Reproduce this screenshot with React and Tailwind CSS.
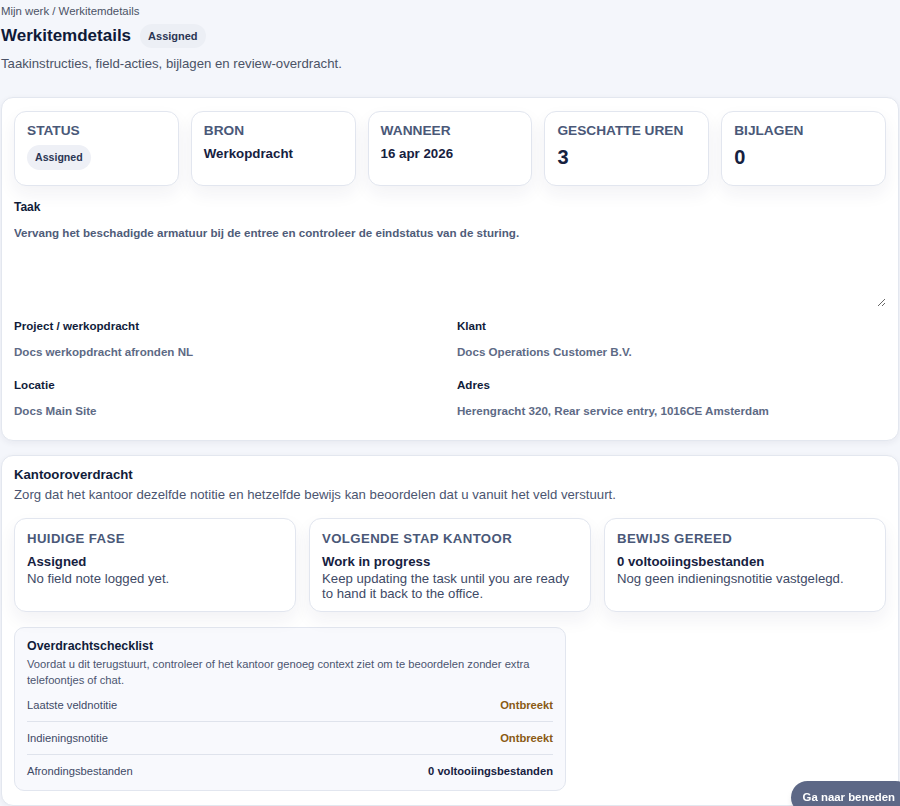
const stats = [
  { label: "Status", badge: "Assigned" },
  { label: "Bron", value: "Werkopdracht" },
  { label: "Wanneer", value: "16 apr 2026" },
  { label: "Geschatte uren", big: "3" },
  { label: "Bijlagen", big: "0" },
];

const handoff = [
  { label: "Huidige fase", title: "Assigned", body: "No field note logged yet." },
  { label: "Volgende stap kantoor", title: "Work in progress", body: "Keep updating the task until you are ready to hand it back to the office." },
  { label: "Bewijs gereed", title: "0 voltooiingsbestanden", body: "Nog geen indieningsnotitie vastgelegd." },
];

const checklist = [
  { label: "Laatste veldnotitie", value: "Ontbreekt", warn: true },
  { label: "Indieningsnotitie", value: "Ontbreekt", warn: true },
  { label: "Afrondingsbestanden", value: "0 voltooiingsbestanden" },
];

const Field = ({ label, value }) => (
  <div>
    <div className="text-[11.6px] font-bold text-[#111c3a] leading-[14px]">{label}</div>
    <div className="mt-[12px] text-[11.6px] font-bold text-[#5d6a85] leading-[14px]">{value}</div>
  </div>
);

export default function App() {
  return (
    <div className="min-h-screen bg-[#f4f6fb] font-['Liberation_Sans',Arial,sans-serif] text-[#111c3a] pb-6">
      <div className="px-[1px] pt-[4px]">
        <div className="text-[11.4px] text-[#4b5366] leading-[14px]">Mijn werk / Werkitemdetails</div>
        <div className="mt-[6px] flex items-center gap-[9px]">
          <h1 className="text-[17px] font-bold text-[#0f1a38] leading-[22px]">Werkitemdetails</h1>
          <span className="rounded-full bg-[#eceff5] px-[8px] py-[5px] text-[11px] font-bold text-[#2b3654] leading-[14px]">Assigned</span>
        </div>
        <p className="mt-[7px] text-[13.2px] text-[#4b5366] leading-[17px]">Taakinstructies, field-acties, bijlagen en review-overdracht.</p>
      </div>

      <section className="mt-[25px] mx-[1px] rounded-[12px] border border-[#e3e7ef] bg-white px-[12px] pt-[13px] shadow-[0_2px_6px_rgba(30,40,70,0.06)]">
        <div className="grid grid-cols-5 gap-[12px]">
          {stats.map((s) => (
            <div key={s.label} className="h-[75px] rounded-[12px] border border-[#e2e6ef] bg-white px-[12px] pt-[11px] shadow-[0_8px_18px_rgba(30,40,80,0.06)]">
              <div className="text-[13.7px] font-bold uppercase text-[#4a5878] leading-[16px]">{s.label}</div>
              {s.badge && (
                <span className="mt-[6px] inline-block rounded-full bg-[#eef0f6] px-[8px] py-[6px] text-[10.6px] font-bold text-[#2b3654] leading-[13px]">{s.badge}</span>
              )}
              {s.value && <div className="mt-[7px] text-[13.3px] font-bold text-[#16213f] leading-[16px]">{s.value}</div>}
              {s.big && <div className="mt-[6px] text-[20px] font-bold text-[#16213f] leading-[24px]">{s.big}</div>}
            </div>
          ))}
        </div>

        <div className="mt-[14px] text-[12px] font-bold text-[#111c3a] leading-[14px]">Taak</div>
        <textarea
          readOnly
          className="mt-[12px] block h-[81px] w-full resize-y bg-transparent p-0 text-[11.6px] font-bold text-[#4f5c79] leading-[14px] outline-none"
          defaultValue="Vervang het beschadigde armatuur bij de entree en controleer de eindstatus van de sturing."
        />

        <div className="mt-[12px] grid grid-cols-2 gap-x-[14px] gap-y-[19px]">
          <Field label="Project / werkopdracht" value="Docs werkopdracht afronden NL" />
          <Field label="Klant" value="Docs Operations Customer B.V." />
          <Field label="Locatie" value="Docs Main Site" />
          <Field label="Adres" value="Herengracht 320, Rear service entry, 1016CE Amsterdam" />
        </div>
        <div className="h-[22px]" />
      </section>

      <section className="mt-[14px] mx-[1px] rounded-[12px] border border-[#e3e7ef] bg-white px-[12px] pt-[10px] pb-[14px] shadow-[0_2px_6px_rgba(30,40,70,0.06)]">
        <h2 className="text-[13.2px] font-bold text-[#111c3a] leading-[17px]">Kantooroverdracht</h2>
        <p className="mt-[3px] text-[13.2px] text-[#4b5570] leading-[17px]">Zorg dat het kantoor dezelfde notitie en hetzelfde bewijs kan beoordelen dat u vanuit het veld verstuurt.</p>

        <div className="mt-[15px] grid grid-cols-3 gap-[13px]">
          {handoff.map((h) => (
            <div key={h.label} className="h-[94px] rounded-[12px] border border-[#e2e6ef] bg-white px-[12px] pt-[11px] shadow-[0_8px_18px_rgba(30,40,80,0.06)]">
              <div className="text-[13.2px] font-bold uppercase tracking-[0.4px] text-[#4a5878] leading-[17px]">{h.label}</div>
              <div className="mt-[7px] text-[13.2px] font-bold text-[#16213f] leading-[16px]">{h.title}</div>
              <div className="mt-[1px] text-[13.2px] text-[#3e4a66] leading-[15px]">{h.body}</div>
            </div>
          ))}
        </div>

        <div className="mt-[15px] w-[552px] rounded-[10px] border border-[#e2e6ef] bg-[#f8f9fd] px-[12px] pt-[10px] pb-[2px]">
          <div className="text-[12.4px] font-bold text-[#111c3a] leading-[16px]">Overdrachtschecklist</div>
          <p className="mt-[2px] text-[11.2px] text-[#4b5570] leading-[16px]">Voordat u dit terugstuurt, controleer of het kantoor genoeg context ziet om te beoordelen zonder extra telefoontjes of chat.</p>
          <div className="mt-[1px]">
            {checklist.map((c, i) => (
              <div key={c.label} className={"flex items-center justify-between h-[33px] text-[11.2px] " + (i < checklist.length - 1 ? "border-b border-[#dfe3ec]" : "")}>
                <span className="text-[#3e4a66]">{c.label}</span>
                <span className={c.warn ? "font-bold text-[#8a5a14]" : "font-bold text-[#16213f]"}>{c.value}</span>
              </div>
            ))}
          </div>
        </div>
      </section>

      <button className="fixed bottom-[-8px] right-[-12px] rounded-full bg-[#5d6886] pl-[12px] pr-[17px] pt-[9px] pb-[10px] text-[11.4px] font-bold text-white leading-[14px] shadow-md">
        Ga naar beneden
      </button>
    </div>
  );
}
